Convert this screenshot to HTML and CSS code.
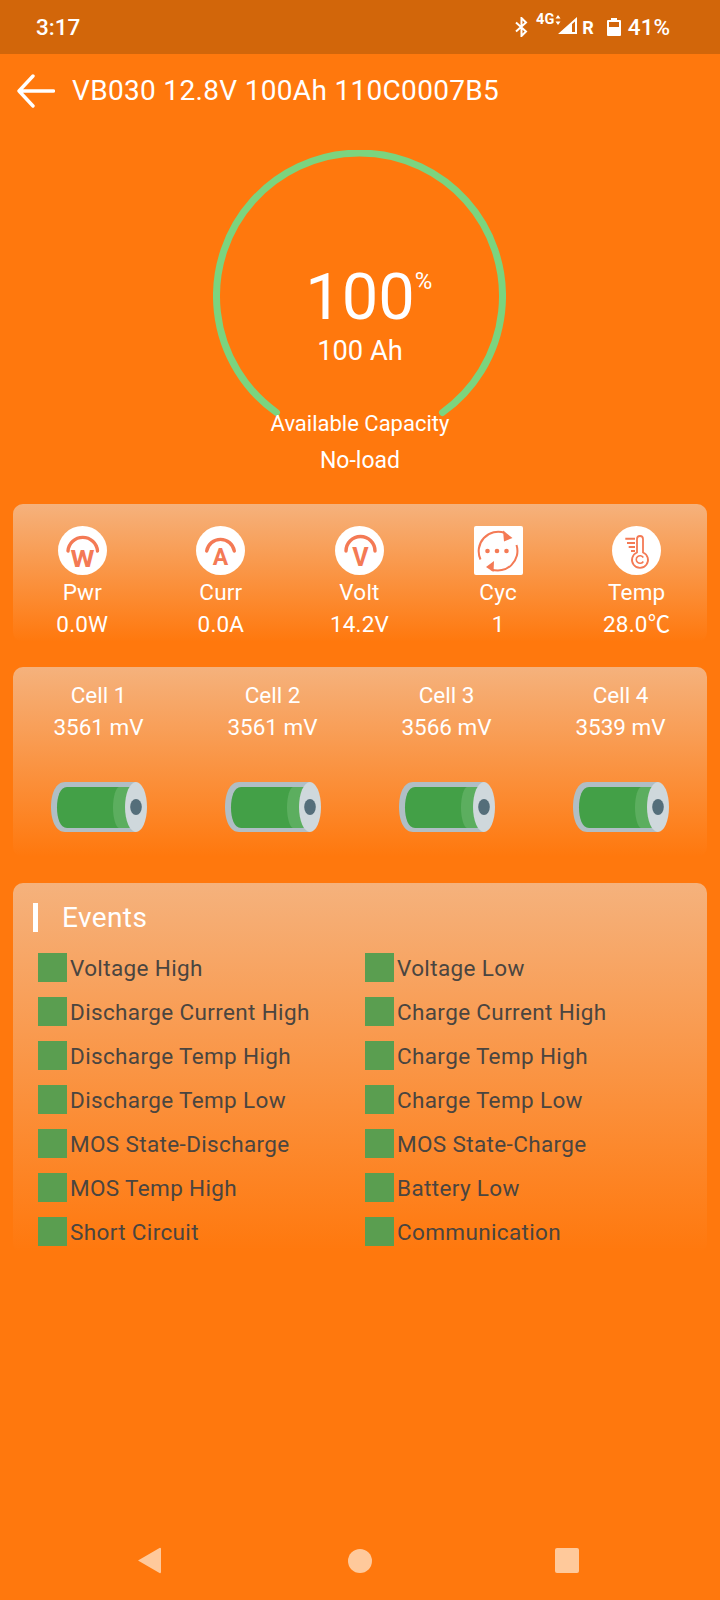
FILE: index.html
```html
<!DOCTYPE html>
<html lang="en">
<head>
  <meta charset="UTF-8" />
  <meta name="viewport" content="width=device-width, initial-scale=1.0" />
  <title>VB030 Battery</title>
  <link rel="stylesheet" href="styles.css">
</head>
<body>
  <div class="screen">
    <div class="status-bar">
      <span class="status-time">3:17</span>
      <div class="status-icons">
        <svg class="ic-bt" width="13" height="20" viewBox="0 0 13 20"><path d="M1 5.500l10 9-4.500 4.500V1L11 5.500l-10 9" fill="none" stroke="#fff" stroke-width="2"/></svg>
        <span class="net">4G</span>
        <svg class="ic-arrows" width="6" height="12" viewBox="0 0 6 12"><path d="M3 1l2.500 3.500h-5zM3 11l2.500-3.500h-5z" fill="#fff"/></svg>
        <svg class="ic-signal" width="19" height="17" viewBox="0 0 19 17"><path d="M0 17L19 0v17zM14 7v8h3V4.500z" fill="#fff" fill-rule="evenodd"/></svg>
        <span class="roam">R</span>
        <svg class="ic-batt" width="14" height="18" viewBox="0 0 14 18"><path d="M4 0h6v2h3a1 1 0 0 1 1 1v14a1 1 0 0 1-1 1H1a1 1 0 0 1-1-1V3a1 1 0 0 1 1-1h3zM2 4v5h10V4z" fill="#fff" fill-rule="evenodd"/></svg>
        <span class="status-pct">41%</span>
      </div>
    </div>

    <div class="title-bar">
      <svg class="back" width="38" height="34" viewBox="0 0 38 34"><path d="M36.500 17H2M16 2L2 17l14 15" fill="none" stroke="#fff" stroke-width="3.400" stroke-linecap="round" stroke-linejoin="round"/></svg>
      <span class="title">VB030 12.8V 100Ah 110C0007B5</span>
    </div>

    <div class="gauge">
      <svg class="gauge-ring" width="293" height="293" viewBox="0 0 293 293"><path d="M63.500 262.500A143 143 0 1 1 229.500 262.500" fill="none" stroke="#7bd47f" stroke-width="7" stroke-linecap="round"/></svg>
      <div class="gauge-value">100<span class="gauge-pct">%</span></div>
      <div class="gauge-ah">100 Ah</div>
      <div class="gauge-label gauge-caption">Available Capacity</div>
      <div class="gauge-label">No-load</div>
    </div>

    <div class="panel stats">
      <div class="stat">
        <svg class="stat-icon" width="49" height="49" viewBox="0 0 49 49"><circle cx="24.500" cy="24.500" r="24.500" fill="#fff"/><path d="M10 25a14.800 14.800 0 0 1 29.500 0" fill="none" stroke="#f47a55" stroke-width="3.400" stroke-linecap="round"/><text x="24.500" y="41" class="icon-letter" textLength="24" lengthAdjust="spacingAndGlyphs">W</text></svg>
        <div class="stat-name">Pwr</div>
        <div class="stat-val">0.0W</div>
      </div>
      <div class="stat">
        <svg class="stat-icon" width="49" height="49" viewBox="0 0 49 49"><circle cx="24.500" cy="24.500" r="24.500" fill="#fff"/><path d="M10.700 25a14 14 0 0 1 27.600 0" fill="none" stroke="#f47a55" stroke-width="3.400" stroke-linecap="round"/><text x="24.500" y="39" class="icon-letter">A</text></svg>
        <div class="stat-name">Curr</div>
        <div class="stat-val">0.0A</div>
      </div>
      <div class="stat">
        <svg class="stat-icon" width="49" height="49" viewBox="0 0 49 49"><circle cx="24.500" cy="24.500" r="24.500" fill="#fff"/><path d="M11 25a14.500 14.500 0 0 1 29 0" fill="none" stroke="#f47a55" stroke-width="3.400" stroke-linecap="round"/><text x="25.500" y="40" class="icon-letter tall">V</text></svg>
        <div class="stat-name">Volt</div>
        <div class="stat-val">14.2V</div>
      </div>
      <div class="stat">
        <svg class="stat-icon" width="49" height="49" viewBox="0 0 49 49"><rect width="49" height="49" rx="2" fill="#fff"/><path d="M6.500 33.500A19.500 19.500 0 0 1 31 7M42.500 19A19.500 19.500 0 0 1 17 43.200" fill="none" stroke="#f47a55" stroke-width="2"/><path d="M29 4.500l9.500 7.500-8.500 3.500zM12 41l8-6-.5 11z" fill="#f47a55"/><circle cx="13.500" cy="25" r="2.300" fill="#f47a55"/><circle cx="23" cy="25" r="2.300" fill="#f47a55"/><circle cx="32.500" cy="25" r="2.300" fill="#f47a55"/></svg>
        <div class="stat-name">Cyc</div>
        <div class="stat-val">1</div>
      </div>
      <div class="stat">
        <svg class="stat-icon" width="49" height="49" viewBox="0 0 49 49"><circle cx="24.500" cy="24.500" r="24.500" fill="#fff"/><path d="M25 26V13a3 3 0 0 1 6 0v13.500a8 8 0 1 1-6 0z" fill="none" stroke="#f47a55" stroke-width="1.800"/><path d="M31.300 31.500a3.800 3.800 0 1 0 0 4" fill="none" stroke="#f47a55" stroke-width="1.600"/><path d="M13.300 12.800H23M15 17h8M16.700 21H23M19 25h4" stroke="#f47a55" stroke-width="2"/></svg>
        <div class="stat-name">Temp</div>
        <div class="stat-val">28.0℃</div>
      </div>
    </div>

    <div class="panel cells">
      <div class="cell">
        <div class="cell-name">Cell 1</div>
        <div class="cell-val">3561 mV</div>
        <svg class="cell-batt" width="96" height="50" viewBox="0 0 96 50"><use href="#battery"/></svg>
      </div>
      <div class="cell">
        <div class="cell-name">Cell 2</div>
        <div class="cell-val">3561 mV</div>
        <svg class="cell-batt" width="96" height="50" viewBox="0 0 96 50"><use href="#battery"/></svg>
      </div>
      <div class="cell">
        <div class="cell-name">Cell 3</div>
        <div class="cell-val">3566 mV</div>
        <svg class="cell-batt" width="96" height="50" viewBox="0 0 96 50"><use href="#battery"/></svg>
      </div>
      <div class="cell">
        <div class="cell-name">Cell 4</div>
        <div class="cell-val">3539 mV</div>
        <svg class="cell-batt" width="96" height="50" viewBox="0 0 96 50"><use href="#battery"/></svg>
      </div>
    </div>

    <div class="panel events">
      <div class="events-head">Events</div>
      <div class="event-grid">
        <div class="event"><i class="dot"></i>Voltage High</div>
        <div class="event"><i class="dot"></i>Voltage Low</div>
        <div class="event"><i class="dot"></i>Discharge Current High</div>
        <div class="event"><i class="dot"></i>Charge Current High</div>
        <div class="event"><i class="dot"></i>Discharge Temp High</div>
        <div class="event"><i class="dot"></i>Charge Temp High</div>
        <div class="event"><i class="dot"></i>Discharge Temp Low</div>
        <div class="event"><i class="dot"></i>Charge Temp Low</div>
        <div class="event"><i class="dot"></i>MOS State-Discharge</div>
        <div class="event"><i class="dot"></i>MOS State-Charge</div>
        <div class="event"><i class="dot"></i>MOS Temp High</div>
        <div class="event"><i class="dot"></i>Battery Low</div>
        <div class="event"><i class="dot"></i>Short Circuit</div>
        <div class="event"><i class="dot"></i>Communication</div>
      </div>
    </div>

    <div class="nav-bar">
      <svg width="24" height="27" viewBox="0 0 24 27"><path d="M22.500 1L1 13.500 22.500 26a1 1 0 0 0 1.500-1V2a1 1 0 0 0-1.500-1z" fill="#ffc99b"/></svg>
      <span class="nav-home"></span>
      <span class="nav-recent"></span>
    </div>
  </div>

  <svg class="defs" width="0" height="0">
    <defs>
      <g id="battery">
        <path d="M14 0h71v50H14C5 50 0 39 0 25S5 0 14 0z" fill="#b0bec5"/>
        <path d="M16 5h64v41H16C9 46 6 36 6 25.500S9 5 16 5z" fill="#43a047"/>
        <path d="M68 5h12v41H68c-3 0-6-10-6-20.500S65 5 68 5z" fill="#5cae5f"/>
        <ellipse cx="85" cy="25" rx="11" ry="25" fill="#cfd8dc"/>
        <ellipse cx="85" cy="25" rx="5.800" ry="8" fill="#546e7a"/>
      </g>
    </defs>
  </svg>
</body>
</html>
```

FILE: styles.css
```css
* {
  box-sizing: border-box;
}
body {
  margin: 0;
  font-family: Roboto, "Noto Sans CJK SC", sans-serif;
  color: #fff;
  background-color: #ff780d;
}
.screen {
  width: 720px;
  height: 1600px;
  display: flex;
  flex-direction: column;
  overflow: hidden;
}
.defs {
  position: absolute;
}

/* status bar */
.status-bar {
  height: 54px;
  flex: none;
  background-color: #d2660a;
  display: flex;
  align-items: center;
  justify-content: space-between;
  padding: 0 50px 0 36px;
  font-size: 22.500px;
  font-weight: 500;
}
.status-icons {
  display: flex;
  align-items: center;
}
.net {
  font-size: 14.500px;
  font-weight: 700;
  margin: -16px 0 0 8px;
}
.ic-arrows {
  margin: -14px 0 0 1px;
}
.ic-signal {
  margin: -3px 0 0 -3px;
}
.roam {
  font-size: 18px;
  font-weight: 700;
  margin-left: 5px;
}
.ic-batt {
  margin: -1px 0 0 13px;
}
.status-pct {
  margin-left: 7px;
}

/* title */
.title-bar {
  height: 72px;
  flex: none;
  display: flex;
  align-items: center;
  padding: 1px 0 0 17px;
}
.back {
  margin-right: 17px;
}
.title {
  font-size: 28px;
  letter-spacing: 0.32px;
}

/* gauge */
.gauge {
  position: relative;
  height: 352px;
  flex: none;
  padding-top: 134px;
  text-align: center;
  margin-bottom: 26px;
}
.gauge-ring {
  position: absolute;
  left: 213px;
  top: 24px;
}
.gauge-value {
  font-size: 65px;
  line-height: 75px;
  margin-bottom: 1px;
  position: relative;
}
.gauge-pct {
  font-size: 24px;
  position: absolute;
  margin-top: 7px;
  line-height: 28px;
}
.gauge-ah {
  font-size: 27.300px;
  line-height: 30px;
}
.gauge-label {
  font-size: 23px;
  line-height: 37px;
  position: relative;
}
.gauge-caption {
  font-size: 22px;
  margin-top: 39px;
}

/* panels */
.panel {
  margin: 0 13px;
  flex: none;
  border-radius: 10px;
  background: linear-gradient(to bottom, rgba(235, 235, 235, 0.5), rgba(235, 235, 235, 0));
}
.stats {
  height: 138px;
  margin-bottom: 25px;
  padding: 22px 1px 0 0;
  display: grid;
  grid-template-columns: repeat(5, 1fr);
  text-align: center;
}
.stat-icon {
  display: block;
  margin: 0 auto;
}
.icon-letter {
  font-family: Roboto, sans-serif;
  font-size: 23px;
  font-weight: 700;
  fill: #f47a55;
  text-anchor: middle;
}
.icon-letter.tall {
  font-size: 25px;
}
.stat-name {
  font-size: 22.500px;
  letter-spacing: 0.2px;
  line-height: 32px;
  margin-top: 1px;
}
.stat-val {
  font-size: 22.500px;
  letter-spacing: 0.2px;
  line-height: 32px;
}
.cells {
  height: 190px;
  margin-bottom: 26px;
  padding-top: 13px;
  display: grid;
  grid-template-columns: repeat(4, 174px);
  text-align: center;
}
.cell {
  margin-left: -3px;
}
.cell-name,
.cell-val {
  font-size: 22.500px;
  line-height: 31.500px;
}
.cell-batt {
  display: block;
  margin: 39px auto 0;
}
.events {
  height: 370px;
  padding: 20px 0 0 20px;
}
.events-head {
  border-left: 5px solid #fff;
  height: 29px;
  line-height: 29px;
  padding-left: 24px;
  font-size: 28px;
  letter-spacing: 0.4px;
}
.event-grid {
  display: grid;
  grid-template-columns: 327px 1fr;
  grid-auto-rows: 44px;
  padding: 21px 0 0 5px;
}
.event {
  display: flex;
  align-items: flex-start;
  gap: 3px;
  color: #4a4540;
  font-size: 22.500px;
  letter-spacing: 0.36px;
  line-height: 31px;
}
.dot {
  width: 29px;
  height: 29px;
  flex: none;
  background-color: #5a9e50;
}

/* nav */
.nav-bar {
  margin-top: auto;
  height: 53px;
  flex: none;
  display: flex;
  align-items: flex-start;
  padding: 0 0 0 137px;
}
.nav-home {
  width: 24px;
  height: 24px;
  border-radius: 50%;
  background-color: #ffc99b;
  margin: 2px 0 0 187px;
}
.nav-recent {
  width: 24px;
  height: 25px;
  border-radius: 2px;
  background-color: #ffc99b;
  margin: 1px 0 0 183px;
}
```
